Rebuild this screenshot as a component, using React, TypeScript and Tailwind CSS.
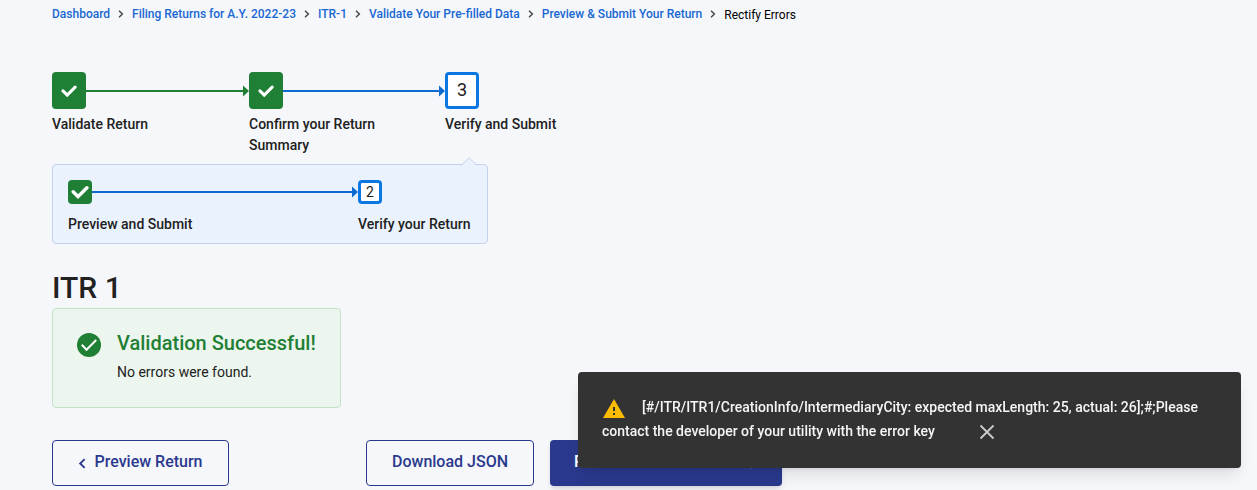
import React, { useState } from "react";

type IconProps = { className?: string };

const Check = ({ className }: IconProps) => (
  <svg viewBox="0 0 18 18" className={className} fill="none" stroke="currentColor" aria-hidden="true">
    <path d="M2.200 8.800l4.800 4.800 8.900-8.900" strokeWidth="3.400" strokeLinecap="round" strokeLinejoin="miter" />
  </svg>
);

const Chevron = ({ className }: IconProps) => (
  <svg viewBox="0 0 6 8" className={className} fill="none" stroke="currentColor" aria-hidden="true">
    <path d="M1 0.700L4.400 4 1 7.300" strokeWidth="1.400" />
  </svg>
);

const CheckCircle = ({ className }: IconProps) => (
  <svg viewBox="0 0 24 24" className={className} aria-hidden="true">
    <circle cx="12" cy="12" r="12" fill="#1f7f35" />
    <path d="M4.800 11.800l4.700 4.900 9.700-9.700" fill="none" stroke="#fff" strokeWidth="2" />
  </svg>
);

const Warning = ({ className }: IconProps) => (
  <svg viewBox="0 0 22 19" className={className} aria-hidden="true">
    <path d="M0 19h22L11 0z" fill="#fbbc05" />
    <path d="M10 8h2v4h-2zM10 14h2v2h-2z" fill="#333" />
  </svg>
);

const crumbs = [
  "Dashboard",
  "Filing Returns for A.Y. 2022-23",
  "ITR-1",
  "Validate Your Pre-filled Data",
  "Preview & Submit Your Return",
];

function Connector({ done }: { done?: boolean }) {
  return (
    <span className={`flex flex-1 items-center ${done ? "text-[#1f7f35]" : "text-[#0b6bd0]"}`}>
      <span className="h-[2px] flex-1 bg-current" />
      <svg viewBox="0 0 6 12" className="h-3 w-[6px]" aria-hidden="true">
        <path d="M0 0.500L6 6 0 11.500z" fill="currentColor" />
      </svg>
    </span>
  );
}

function Breadcrumb() {
  return (
    <nav aria-label="Breadcrumb">
      <ol className="flex items-center text-xs font-medium text-[#1967d2]">
        {crumbs.map((c) => (
          <li key={c} className="flex items-center whitespace-nowrap">
            <a href="#">{c}</a>
            <Chevron className="mx-2 h-2 w-[6px] text-[#444]" />
          </li>
        ))}
        <li aria-current="page" className="mt-[2px] font-normal whitespace-nowrap text-black">
          Rectify Errors
        </li>
      </ol>
    </nav>
  );
}

export default function App() {
  const [toast, setToast] = useState(true);
  return (
    <div className="min-h-screen bg-[#f5f7fb] font-['Roboto',sans-serif] text-[#212121]">
      <main className="px-[52px] pt-[5px]">
        <Breadcrumb />

        <ol className="mt-[49px] flex text-sm leading-[21px] font-medium">
          <li className="w-[197px]">
            <div className="flex h-[37px] items-center">
              <span className="flex h-full w-[34px] items-center justify-center rounded bg-[#1f7f35] text-white">
                <Check className="size-4" />
              </span>
              <Connector done />
            </div>
            <p className="mt-[5px] w-[145px]">Validate Return</p>
          </li>
          <li className="w-[196px]">
            <div className="flex h-[37px] items-center">
              <span className="flex h-full w-[34px] items-center justify-center rounded bg-[#1f7f35] text-white">
                <Check className="size-4" />
              </span>
              <Connector />
            </div>
            <p className="mt-[5px] w-[145px]">Confirm your Return Summary</p>
          </li>
          <li>
            <div className="flex h-[37px] w-[34px] items-center justify-center rounded border-3 border-[#0b77e3] bg-white pb-px text-lg leading-none font-normal">
              3
            </div>
            <p className="mt-[5px]">Verify and Submit</p>
          </li>
        </ol>

        <section className="relative mt-2 w-[436px] rounded border border-[#c5d2ec] bg-[#eaf3fd] px-[15px] pt-[15px] pb-2">
          <svg viewBox="0 0 16 9" className="absolute -top-2 right-[10px] h-[9px] w-4" aria-hidden="true">
            <path d="M0 9L8 1l8 8z" fill="#eaf3fd" />
            <path d="M0 8.500L8 0.700l8 7.800" fill="none" stroke="#c5d2ec" />
          </svg>
          <ol className="flex text-sm leading-[21px] font-medium">
            <li className="flex-1">
              <div className="flex h-6 items-center">
                <span className="flex size-6 items-center justify-center rounded bg-[#1f7f35] text-white">
                  <Check className="size-[18px]" />
                </span>
                <Connector />
              </div>
              <p className="mt-[10px]">Preview and Submit</p>
            </li>
            <li className="min-w-[114px]">
              <div className="flex size-6 items-center justify-center rounded border-3 border-[#0b77e3] bg-white font-normal">
                2
              </div>
              <p className="mt-[10px]">Verify your Return</p>
            </li>
          </ol>
        </section>

        <h1 className="mt-6 text-3xl leading-10 font-medium">ITR 1</h1>

        <section className="flex h-[100px] w-fit gap-4 rounded border border-[#c3e3c9] bg-[#edf6ee] px-6 pt-[22px]">
          <CheckCircle className="mt-[2px] size-6" />
          <div>
            <h2 className="text-xl leading-6 font-medium text-[#1f7f35]">Validation Successful!</h2>
            <p className="mt-[7px] text-sm leading-5">No errors were found.</p>
          </div>
        </section>

        <div className="mt-8 flex h-[46px] text-base font-medium text-[#2a398d]">
          <button className="flex w-[177px] items-center justify-center gap-2 rounded border border-current pb-[2px]">
            <Chevron className="mt-[2px] h-[11px] w-2 rotate-180" />
            Preview Return
          </button>
          <button className="ml-[137px] w-[168px] rounded border border-current pb-[2px]">Download JSON</button>
          <button className="ml-4 flex w-[232px] items-center gap-2 rounded bg-[#2a398d] px-6 pb-[2px] text-white shadow-md">
            Proceed To Verification
            <Chevron className="mt-[2px] h-[11px] w-2" />
          </button>
        </div>
      </main>

      {toast && (
        <div
          role="alert"
          className="fixed right-4 bottom-[22px] w-[663px] rounded bg-[#333] px-6 pt-[23px] pb-[25px] text-sm leading-6 font-medium text-[#f5f5f5] shadow-lg"
        >
          <Warning className="mr-[17px] ml-px inline h-[19px] w-[22px]" />
          [#/ITR/ITR1/CreationInfo/IntermediaryCity: expected maxLength: 25, actual: 26];#;Please contact the developer
          of your utility with the error key
          <button aria-label="Close" className="ml-11 align-middle text-[#ccc]" onClick={() => setToast(false)}>
            <svg viewBox="0 0 16 16" className="size-4" fill="none" stroke="currentColor" aria-hidden="true">
              <path d="M1.500 1.500l13 13M14.500 1.500l-13 13" strokeWidth="1.800" />
            </svg>
          </button>
        </div>
      )}
    </div>
  );
}
